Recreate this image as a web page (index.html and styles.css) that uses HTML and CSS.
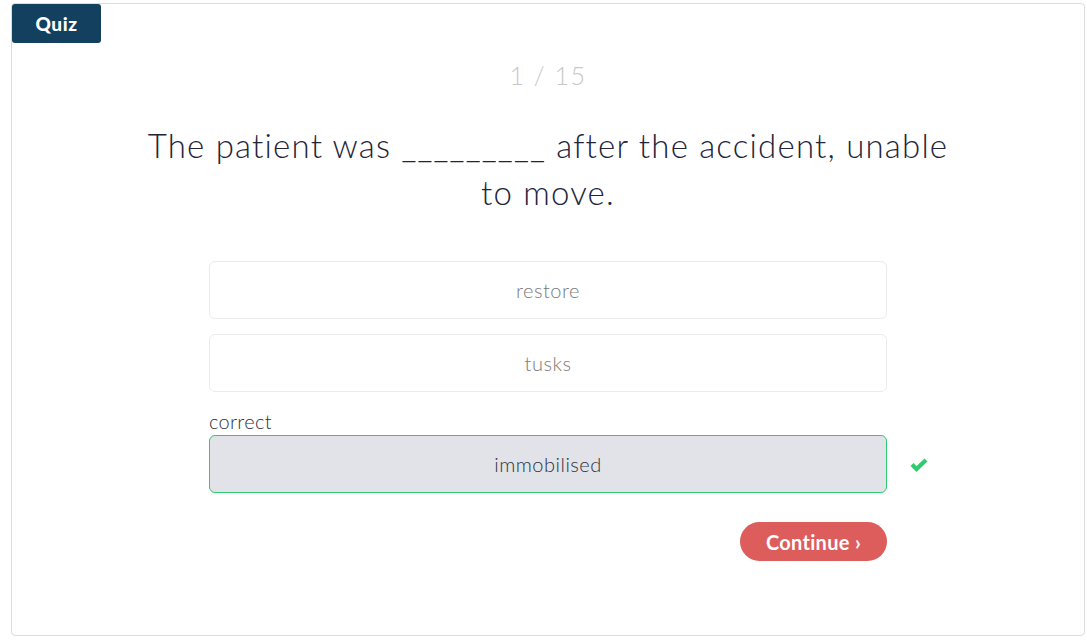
FILE: index.html
```html
<!DOCTYPE html>
<html lang="en">
<head>
  <meta charset="utf-8">
  <title>Quiz</title>
  <link rel="stylesheet" href="styles.css">
</head>
<body>
  <div class="card">
    <div class="badge">Quiz</div>
    <div class="counter">1 / 15</div>
    <h2 class="question">The patient was _________ after the accident, unable to move.</h2>

    <div class="answers">
      <div class="option">restore</div>
      <div class="option">tusks</div>
      <div class="answer-group">
        <span class="label">correct</span>
        <div class="option selected">
          immobilised
          <svg class="check" width="18" height="14" viewBox="0 0 18 14">
            <path d="M2 6.5 L6.5 11 L16 2" fill="none" stroke="#2ecc71" stroke-width="4.2" stroke-linejoin="miter"/>
          </svg>
        </div>
      </div>
      <div class="actions">
        <button class="continue">Continue ›</button>
      </div>
    </div>
  </div>
</body>
</html>
```

FILE: styles.css
```css
* {
  box-sizing: border-box;
}

body {
  margin: 0;
  padding: 3px 2px 5px 11px;
  background: #ffffff;
  font-family: "Lato", sans-serif;
}

.card {
  height: 633px;
  border: 1px solid #dcdcdc;
  border-radius: 4px;
}

.badge {
  display: inline-block;
  width: 89px;
  height: 39px;
  line-height: 39px;
  background: #13405f;
  color: #ffffff;
  font-weight: 900;
  font-size: 19px;
  letter-spacing: 0.6px;
  text-align: center;
  border-radius: 3px;
}

.counter {
  margin-top: 17px;
  text-align: center;
  font-size: 25px;
  font-weight: 300;
  letter-spacing: 1.5px;
  color: #c8c8c8;
}

.question {
  width: 815px;
  margin: 32px auto 0;
  text-align: center;
  font-size: 33px;
  font-weight: 300;
  letter-spacing: 1.2px;
  line-height: 47px;
  color: #22243a;
}

.answers {
  width: 678px;
  margin: 45px auto 0;
  display: flex;
  flex-direction: column;
  gap: 15px;
}

.option {
  position: relative;
  height: 58px;
  display: flex;
  align-items: center;
  justify-content: center;
  border: 1px solid #ebebeb;
  border-radius: 6px;
  font-size: 20px;
  font-weight: 300;
  letter-spacing: 0.5px;
  color: #7a7a7a;
}

.answer-group {
  display: flex;
  flex-direction: column;
  gap: 2px;
  margin-top: 2px;
}

.label {
  font-size: 20px;
  font-weight: 300;
  letter-spacing: 0.3px;
  color: #2f3040;
}

.option.selected {
  background: #e1e3e8;
  border-color: #2ecc71;
  color: #2f3040;
}

.check {
  position: absolute;
  right: -42px;
  top: 22px;
}

.actions {
  display: flex;
  justify-content: flex-end;
  margin-top: 14px;
}

.continue {
  height: 39px;
  padding: 0 26px;
  border: none;
  border-radius: 20px;
  background: #dd5c5c;
  color: #ffffff;
  font-family: "Lato", sans-serif;
  font-size: 20px;
  font-weight: 700;
  letter-spacing: 0.3px;
}
```
